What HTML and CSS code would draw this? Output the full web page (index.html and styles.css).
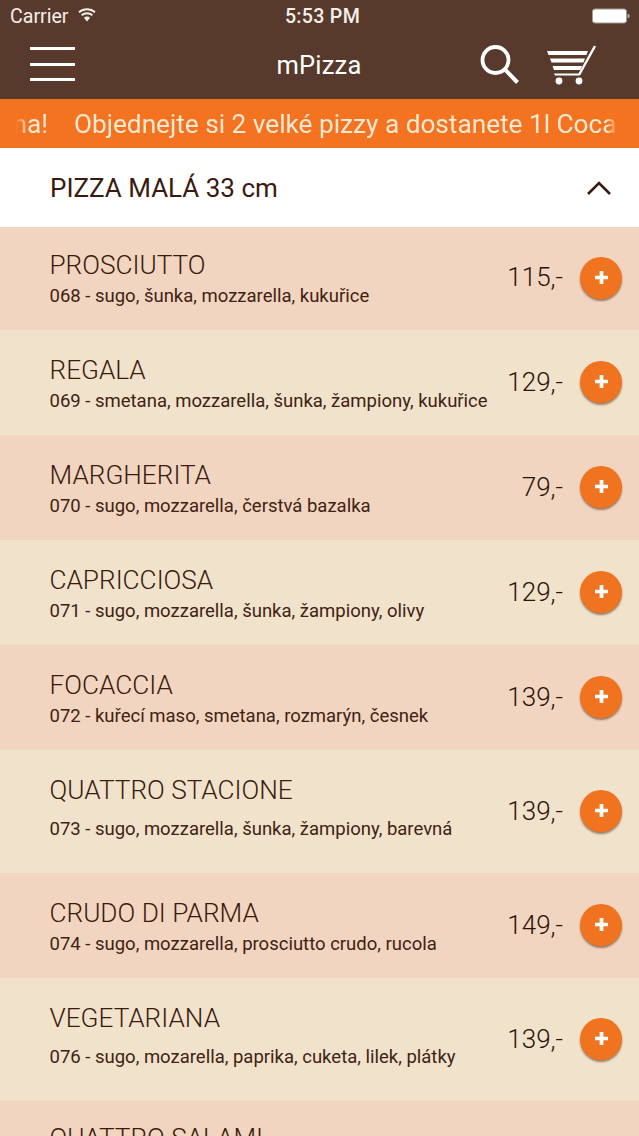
FILE: index.html
```html
<!DOCTYPE html>
<html lang="cs">
<head>
<meta charset="utf-8">
<title>mPizza</title>
<link rel="stylesheet" href="styles.css">
</head>
<body>
<div class="app">
  <header class="top">
    <div class="status">
      <div class="status-left">
        <span>Carrier</span>
        <svg class="wifi" width="20" height="14" viewBox="0 0 20 14"><path d="M10 13.500 6.900 9.800a4.800 4.800 0 0 1 6.200 0z" fill="#f5efe9"/><path d="M4.600 7.200a8.300 8.300 0 0 1 10.800 0M2 4.200a12.300 12.300 0 0 1 16 0" fill="none" stroke="#f5efe9" stroke-width="1.900"/></svg>
      </div>
      <span class="clock">5:53 PM</span>
      <svg class="battery" width="38" height="16" viewBox="0 0 38 16"><rect x="0.5" y="1" width="34" height="14" rx="2.500" fill="#fff" stroke="#a89a90"/><path d="M35.500 6h1a1 1 0 0 1 1 1v2a1 1 0 0 1-1 1h-1z" fill="#b5a99f"/></svg>
    </div>
    <nav class="nav">
      <div class="burger"><i></i><i></i><i></i></div>
      <div class="brand">mPizza</div>
      <div class="tools">
        <svg width="42" height="42" viewBox="0 0 42 42"><circle cx="16.500" cy="16" r="13" fill="none" stroke="#fff" stroke-width="3.800"/><path d="M26 25.500 38.500 38.500" stroke="#fff" stroke-width="4" fill="none"/></svg>
        <svg width="52" height="44" viewBox="0 0 52 44"><g fill="#fff"><path d="M0 8h41l-1.600 4H1.500z"/><path d="M3 15.500h35l-1.600 4H4.500z"/><path d="M5.500 23h29.500l-1.600 4H7z"/><path d="M7 30.500h26l-.8 2H8z"/><circle cx="12" cy="38" r="3.400"/><circle cx="32" cy="38" r="3.400"/></g><path d="M32 32 48 3" stroke="#fff" stroke-width="2.400" fill="none"/></svg>
      </div>
    </nav>
  </header>
  <div class="ticker">
    <div class="ticker-window">
      <div class="ticker-lead"><span>Objednejte si 2 velké pizzy a dostanete 1l Coca Cola zdarma!</span></div>
      <span class="ticker-main">Objednejte si 2 velké pizzy a dostanete 1l Coca Cola zdarma!</span>
    </div>
  </div>
  <section class="category">
    <h1>PIZZA MALÁ 33 cm</h1>
    <svg width="26" height="16" viewBox="0 0 26 16"><path d="M2 14 13 3l11 11" fill="none" stroke="#3a1a10" stroke-width="2.600"/></svg>
  </section>
  <ul class="menu">
    <li class="row odd first">
      <div class="info"><h2>PROSCIUTTO</h2><p>068 - sugo, šunka, mozzarella, kukuřice</p></div>
      <div class="price">115,-</div><button class="add"><svg width="13" height="13" viewBox="0 0 14 14"><path d="M5 0h4v5h5v4H9v5H5V9H0V5h5z" fill="#fff"/></svg></button>
    </li>
    <li class="row even">
      <div class="info"><h2>REGALA</h2><p>069 - smetana, mozzarella, šunka, žampiony, kukuřice</p></div>
      <div class="price">129,-</div><button class="add"><svg width="13" height="13" viewBox="0 0 14 14"><path d="M5 0h4v5h5v4H9v5H5V9H0V5h5z" fill="#fff"/></svg></button>
    </li>
    <li class="row odd">
      <div class="info"><h2>MARGHERITA</h2><p>070 - sugo, mozzarella, čerstvá bazalka</p></div>
      <div class="price">79,-</div><button class="add"><svg width="13" height="13" viewBox="0 0 14 14"><path d="M5 0h4v5h5v4H9v5H5V9H0V5h5z" fill="#fff"/></svg></button>
    </li>
    <li class="row even">
      <div class="info"><h2>CAPRICCIOSA</h2><p>071 - sugo, mozzarella, šunka, žampiony, olivy</p></div>
      <div class="price">129,-</div><button class="add"><svg width="13" height="13" viewBox="0 0 14 14"><path d="M5 0h4v5h5v4H9v5H5V9H0V5h5z" fill="#fff"/></svg></button>
    </li>
    <li class="row odd">
      <div class="info"><h2>FOCACCIA</h2><p>072 - kuřecí maso, smetana, rozmarýn, česnek</p></div>
      <div class="price">139,-</div><button class="add"><svg width="13" height="13" viewBox="0 0 14 14"><path d="M5 0h4v5h5v4H9v5H5V9H0V5h5z" fill="#fff"/></svg></button>
    </li>
    <li class="row even tall">
      <div class="info"><h2>QUATTRO STACIONE</h2><p>073 - sugo, mozzarella, šunka, žampiony, barevná</p></div>
      <div class="price">139,-</div><button class="add"><svg width="13" height="13" viewBox="0 0 14 14"><path d="M5 0h4v5h5v4H9v5H5V9H0V5h5z" fill="#fff"/></svg></button>
    </li>
    <li class="row odd">
      <div class="info"><h2>CRUDO DI PARMA</h2><p>074 - sugo, mozzarella, prosciutto crudo, rucola</p></div>
      <div class="price">149,-</div><button class="add"><svg width="13" height="13" viewBox="0 0 14 14"><path d="M5 0h4v5h5v4H9v5H5V9H0V5h5z" fill="#fff"/></svg></button>
    </li>
    <li class="row even tall">
      <div class="info"><h2>VEGETARIANA</h2><p>076 - sugo, mozarella, paprika, cuketa, lilek, plátky</p></div>
      <div class="price">139,-</div><button class="add"><svg width="13" height="13" viewBox="0 0 14 14"><path d="M5 0h4v5h5v4H9v5H5V9H0V5h5z" fill="#fff"/></svg></button>
    </li>
    <li class="row odd tall last">
      <div class="info"><h2>QUATTRO SALAMI</h2><p>077 - sugo, mozzarella, salám</p></div>
      <div class="price">139,-</div><button class="add"><svg width="13" height="13" viewBox="0 0 14 14"><path d="M5 0h4v5h5v4H9v5H5V9H0V5h5z" fill="#fff"/></svg></button>
    </li>
  </ul>
</div>
</body>
</html>
```
FILE: styles.css
```css
* { box-sizing: border-box; }
html, body { margin: 0; padding: 0; }
body { font-family: Roboto, "Liberation Sans", sans-serif; background: #fff; color: #3a1d10; }
.app { width: 639px; height: 1136px; overflow: hidden; }

.top { background: #573a2c; height: 99px; color: #fff; }
.status { height: 33px; display: grid; grid-template-columns: 1fr auto 1fr; align-items: center; padding: 0 9px 0 10px; font-size: 19.6px; color: #f5efe9; }
.status-left { display: flex; align-items: center; gap: 8px; }
.wifi { margin-top: -4px; }
.clock { font-weight: 500; letter-spacing: .3px; margin-left: 5px; }
.battery { margin-top: -2px; justify-self: end; }

.nav { height: 66px; display: grid; grid-template-columns: 1fr auto 1fr; align-items: center; padding: 0 40px 2px 30px; }
.burger { width: 45px; height: 34px; display: flex; flex-direction: column; justify-content: space-between; margin-top: -2px; }
.burger i { display: block; height: 3px; background: #fff; }
.brand { font-size: 25.500px; letter-spacing: .2px; margin-left: 9px; margin-top: -1px; }
.tools { display: flex; align-items: center; justify-content: flex-end; gap: 26px; }

.ticker { height: 49px; background: #f37321; display: flex; align-items: center; padding: 0 21px 0 15px; color: #fde8d2; font-size: 26.200px; }
.ticker-window { flex: 1; min-width: 0; display: flex; gap: 26px; overflow: hidden; white-space: nowrap; -webkit-mask-image: linear-gradient(90deg, transparent 0, #000 14px, #000 calc(100% - 12px), transparent 100%); mask-image: linear-gradient(90deg, transparent 0, #000 14px, #000 calc(100% - 12px), transparent 100%); }
.ticker-lead { flex: none; width: 33px; display: flex; justify-content: flex-end; }
.ticker-lead span { flex: none; }
.ticker-main { flex: none; }

.category { height: 79px; background: #fff; display: flex; align-items: center; justify-content: space-between; padding: 0 27px 0 50px; }
.category h1 { margin: 0; font-size: 26px; font-weight: 400; color: #3a1a10; }

.menu { list-style: none; margin: 0; padding: 0; }
.row { display: flex; align-items: center; height: 105px; padding: 0 17px 0 49.500px; }
.row.first { height: 103px; }
.row.tall { height: 123px; }
.odd { background: #f2d5c0; }
.even { background: #f1e2cc; }
.info { flex: 1; min-width: 0; margin-top: 4px; }
.first .info { margin-top: 2px; }
.tall .info { margin-top: -6px; }
.last .info { margin-top: -12px; }
.info h2 { margin: 0; font-size: 26.200px; font-weight: 300; line-height: 32px; color: #3a1a0c; }
.info p { margin: 1px 0 0; font-size: 18.500px; line-height: 29px; white-space: nowrap; color: #3f2213; }
.tall .info p { margin-top: 9px; }
.price { font-size: 26px; font-weight: 300; color: #2a1207; margin-right: 17px; margin-top: -1px; }
.first .price { margin-top: -3px; }
.add { width: 42px; height: 42px; border-radius: 50%; border: 0; padding: 0; margin-top: -2px; background: #f0731f; display: flex; align-items: center; justify-content: center; box-shadow: 0 2px 2px rgba(90, 50, 20, .55); }
```
